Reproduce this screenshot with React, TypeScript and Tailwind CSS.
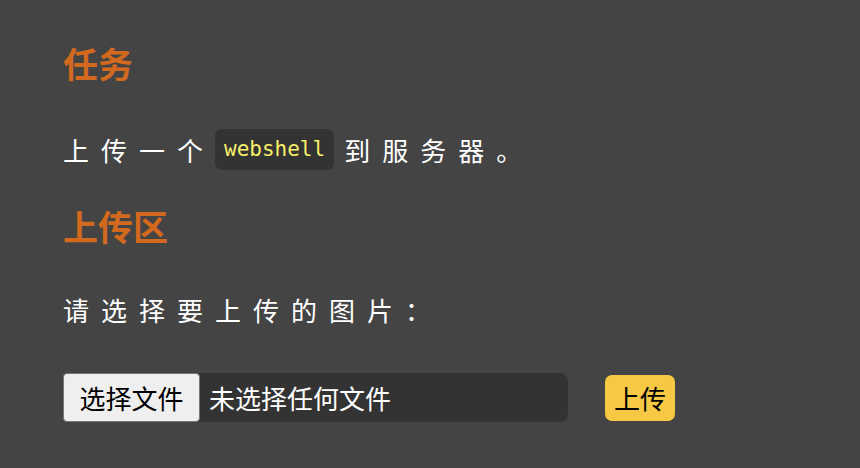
import React from "react";

const cjk = '"Noto Sans CJK SC", "Liberation Sans", sans-serif';

export default function App() {
  return (
    <div
      className="min-h-screen w-full bg-[#444444] px-[63px] pt-[39px]"
      style={{ fontFamily: cjk }}
    >
      {/* Task */}
      <h2 className="text-[35px] font-bold leading-[48px] text-[#d2691e]">
        任务
      </h2>
      <p className="mt-[42px] flex items-center text-[26px] leading-[41px] tracking-[12px] text-white">
        <span>上传一个</span>
        <code
          className="mr-[10px] rounded-[7px] bg-[#333333] px-[9px] text-[21px] font-medium leading-[41px] tracking-[0px] text-[#f8f06a]"
          style={{ fontFamily: '"DejaVu Sans Mono", monospace' }}
        >
          webshell
        </code>
        <span>到服务器。</span>
      </p>

      {/* Upload area */}
      <h2 className="mt-[32px] text-[35px] font-bold leading-[48px] text-[#d2691e]">
        上传区
      </h2>
      <p className="mt-[42px] text-[26px] leading-[36px] tracking-[12px] text-white">
        请选择要上传的图片：
      </p>

      <div className="mt-[45px] flex items-center">
        <div className="flex h-[49px] w-[505px] items-center rounded-[8px] bg-[#333333]">
          <div className="flex h-full w-[137px] items-center justify-center rounded-[4px] border border-[#767676] bg-[#efefef] text-[26px] text-black">
            选择文件
          </div>
          <span className="ml-[9px] text-[26px] text-white">未选择任何文件</span>
        </div>
        <button className="ml-[37px] flex h-[46px] w-[70px] items-center justify-center rounded-[7px] bg-[#f6c844] text-[26px] text-black">
          上传
        </button>
      </div>
    </div>
  );
}
